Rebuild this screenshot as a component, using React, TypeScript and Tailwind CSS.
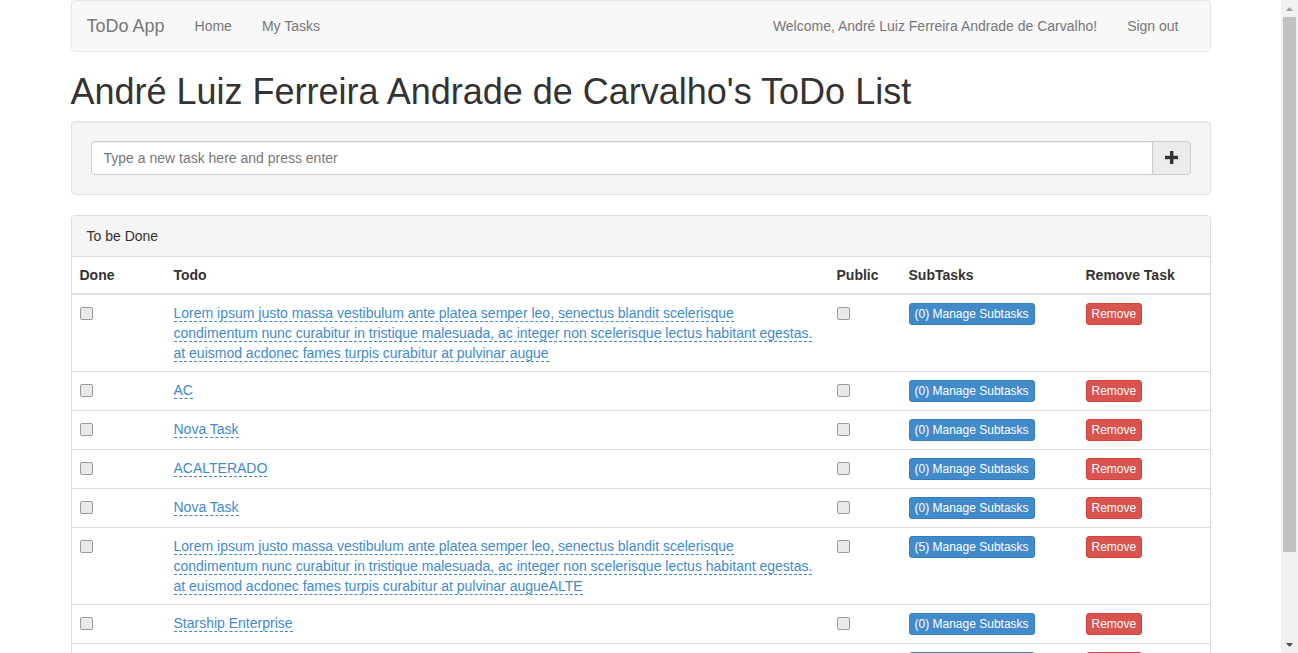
const lorem1 =
  "Lorem ipsum justo massa vestibulum ante platea semper leo, senectus blandit scelerisque condimentum nunc curabitur in tristique malesuada, ac integer non scelerisque lectus habitant egestas. at euismod acdonec fames turpis curabitur at pulvinar augue";

const tasks = [
  { text: lorem1, subs: 0 },
  { text: "AC", subs: 0 },
  { text: "Nova Task", subs: 0 },
  { text: "ACALTERADO", subs: 0 },
  { text: "Nova Task", subs: 0 },
  { text: lorem1 + "ALTE", subs: 5 },
  { text: "Starship Enterprise", subs: 0 },
  { text: "Nova Task", subs: 0 },
];

function Checkbox() {
  return (
    <input
      type="checkbox"
      className="mt-[4px] h-[13px] w-[13px] appearance-none rounded-[2px] border border-[#9a9a9a] bg-[#e9e9e9] align-top"
    />
  );
}

export default function App() {
  return (
    <div className="flex h-[653px] overflow-hidden bg-white font-['Liberation_Sans',Arial,sans-serif] text-[14px] leading-[20px] text-[#333]">
      <div className="flex-1 overflow-hidden">
        <div className="mx-auto w-[1170px] px-[15px]">
          <nav className="mb-[20px] flex h-[52px] items-center justify-between rounded-[4px] border border-[#e7e7e7] bg-[#f8f8f8]">
            <div className="flex items-center">
              <a className="px-[15px] text-[18px] text-[#777]">ToDo App</a>
              <a className="px-[15px] text-[#777]">Home</a>
              <a className="px-[15px] text-[#777]">My Tasks</a>
            </div>
            <div className="flex items-center pr-[16px]">
              <span className="px-[15px] text-[#777]">Welcome, André Luiz Ferreira Andrade de Carvalho!</span>
              <a className="px-[15px] text-[#777]">Sign out</a>
            </div>
          </nav>

          <h1 className="mb-[9px] text-[36px] leading-[39.6px] font-medium">
            André Luiz Ferreira Andrade de Carvalho's ToDo List
          </h1>

          <div className="mb-[20px] rounded-[4px] border border-[#e3e3e3] bg-[#f5f5f5] px-[19px] pt-[19px] pb-[19px] shadow-[inset_0_1px_1px_rgba(0,0,0,0.05)]">
            <div className="flex">
              <input
                placeholder="Type a new task here and press enter"
                className="h-[34px] flex-1 rounded-l-[4px] border border-[#ccc] bg-white px-[12px] text-[14px] shadow-[inset_0_1px_1px_rgba(0,0,0,0.075)] outline-none placeholder:text-[#777]"
              />
              <button className="-ml-px flex h-[34px] w-[39px] items-center justify-center rounded-r-[4px] border border-[#ccc] bg-[#ebebeb]">
                <svg width="13" height="13" viewBox="0 0 13 13">
                  <rect x="5" y="0" width="3.4" height="13" fill="#333" />
                  <rect x="0" y="4.8" width="13" height="3.4" fill="#333" />
                </svg>
              </button>
            </div>
          </div>

          <div className="rounded-[4px] border border-[#ddd] bg-white">
            <div className="rounded-t-[3px] border-b border-[#ddd] bg-[#f5f5f5] px-[15px] py-[10px]">To be Done</div>
            <table className="w-full table-fixed border-collapse">
              <thead>
                <tr className="border-b-2 border-[#ddd]">
                  <th className="w-[94px] p-[8px] text-left font-bold">Done</th>
                  <th className="p-[8px] text-left font-bold">Todo</th>
                  <th className="w-[72px] p-[8px] text-left font-bold">Public</th>
                  <th className="w-[177px] p-[8px] text-left font-bold">SubTasks</th>
                  <th className="w-[132px] p-[8px] text-left font-bold">Remove Task</th>
                </tr>
              </thead>
              <tbody>
                {tasks.map((t, i) => (
                  <tr key={i} className={i > 0 ? "border-t border-[#ddd]" : ""}>
                    <td className="p-[8px] align-top">
                      <Checkbox />
                    </td>
                    <td className="p-[8px] align-top">
                      <a className="border-b border-dashed border-[#428bca] text-[#428bca]">{t.text}</a>
                    </td>
                    <td className="p-[8px] align-top">
                      <Checkbox />
                    </td>
                    <td className="p-[8px] align-top">
                      <button className="rounded-[3px] border border-[#357ebd] bg-[#428bca] px-[5px] py-[1px] text-[12px] leading-[18px] text-white">
                        ({t.subs}) Manage Subtasks
                      </button>
                    </td>
                    <td className="p-[8px] align-top">
                      <button className="rounded-[3px] border border-[#d43f3a] bg-[#d9534f] px-[5px] py-[1px] text-[12px] leading-[18px] text-white">
                        Remove
                      </button>
                    </td>
                  </tr>
                ))}
              </tbody>
            </table>
          </div>
        </div>
      </div>

      {/* fake window scrollbar */}
      <div className="flex w-[17px] flex-col items-center bg-[#f1f1f1]">
        <div className="flex h-[17px] items-center justify-center">
          <svg width="7" height="4" viewBox="0 0 7 4">
            <polygon points="3.5,0 7,4 0,4" fill="#a3a3a3" />
          </svg>
        </div>
        <div className="h-[535px] w-[13px] bg-[#c1c1c1]" />
        <div className="flex-1" />
        <div className="flex h-[17px] items-center justify-center">
          <svg width="7" height="4" viewBox="0 0 7 4">
            <polygon points="0,0 7,0 3.5,4" fill="#505050" />
          </svg>
        </div>
      </div>
    </div>
  );
}
